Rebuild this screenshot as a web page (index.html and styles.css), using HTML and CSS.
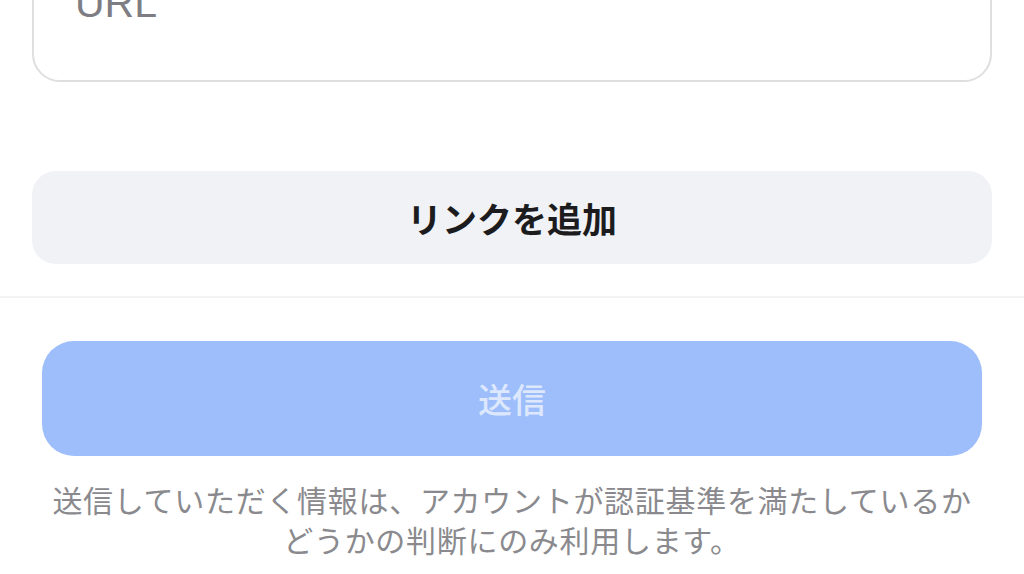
FILE: index.html
```html
<!DOCTYPE html>
<html lang="ja">
<head>
<meta charset="utf-8">
<link rel="stylesheet" href="styles.css">
</head>
<body>
  <div class="form">
    <div class="field"><span class="placeholder">URL</span></div>
    <button class="add-link">リンクを追加</button>
  </div>
  <div class="footer">
    <button class="send">送信</button>
    <p class="note">送信していただく情報は、アカウントが認証基準を満たしているかどうかの判断にのみ利用します。</p>
  </div>
</body>
</html>
```
FILE: styles.css
```css
html, body {
  margin: 0;
  padding: 0;
  background: #ffffff;
  overflow: hidden;
}
body {
  font-family: "Noto Sans CJK JP", "Noto Sans", sans-serif;
  width: 1024px;
  height: 574px;
}
.form {
  display: flex;
  flex-direction: column;
  gap: 89px;
  padding: 0 32px 32px 32px;
}
.field {
  box-sizing: border-box;
  height: 130px;
  margin-top: -48px;
  border: 2px solid #dfdfe2;
  border-radius: 28px;
  padding: 29px 40px 0 41px;
  background: #fff;
}
.placeholder {
  font-family: "Liberation Sans", Arial, sans-serif;
  font-size: 41px;
  line-height: 40px;
  color: #7d7d83;
  display: block;
}
.add-link {
  height: 93px;
  border: none;
  border-radius: 24px;
  background: #f1f2f6;
  font-family: "Noto Sans CJK JP", sans-serif;
  font-size: 35px;
  font-weight: 700;
  color: #1c1c1e;
  padding: 0;
}
.footer {
  border-top: 2px solid #f3f3f5;
  padding: 43px 42px 0 42px;
  display: flex;
  flex-direction: column;
  align-items: stretch;
}
.send {
  height: 115px;
  border: none;
  border-radius: 32px;
  background: #9dbefb;
  color: #dde8fd;
  font-family: "Noto Sans CJK JP", sans-serif;
  font-size: 34px;
  font-weight: 500;
  padding: 0;
}
.note {
  margin: 23px 0 0 0;
  text-align: center;
  font-size: 30px;
  letter-spacing: 0.7px;
  line-height: 40px;
  color: #8a8a8e;
  padding: 0 8px;
}
```
